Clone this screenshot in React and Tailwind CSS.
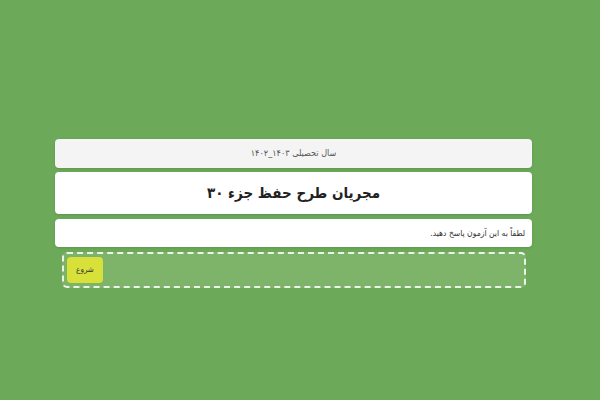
import React from "react";

const App = () => {
  return (
    <div
      dir="rtl"
      className="min-h-[400px] w-[600px] bg-[#6caa5a] pt-[139px]"
      style={{ fontFamily: '"DejaVu Sans Condensed", "DejaVu Sans", sans-serif' }}
    >
      <div className="mr-[68px] w-[477px] flex flex-col gap-[4px]">
        <div className="h-[29px] bg-[#f4f4f4] rounded-[4px] shadow-sm flex items-center justify-center text-[9px] text-[#555]">
          سال تحصیلی ۱۴۰۳_۱۴۰۲
        </div>
        <div className="h-[42px] bg-white rounded-[4px] shadow-sm flex items-center justify-center text-[15px] font-bold text-[#222]">
          مجریان طرح حفظ جزء ۳۰
        </div>
        <div className="mt-[1px] h-[28px] bg-white rounded-[4px] shadow-sm flex items-center px-[7px] text-[8.5px] text-[#333]">
          لطفاً به این آزمون پاسخ دهید.
        </div>
        <div className="mt-[1px] mr-[6px] ml-[7px] h-[36px] border-2 border-dashed border-white/85 rounded-[5px] bg-[#7db46a] flex items-center pl-[3px]">
          <div className="mr-auto h-[26px] w-[36px] rounded-[4px] bg-[#d7e13a] flex items-center justify-center text-[8px] text-[#333]">
            شروع
          </div>
        </div>
      </div>
    </div>
  );
};

export default App;
